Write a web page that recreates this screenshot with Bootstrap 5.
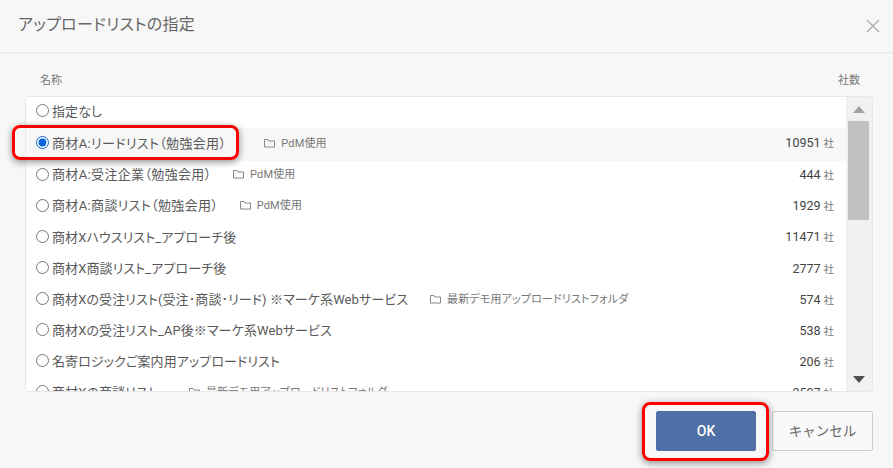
<!DOCTYPE html>
<html lang="ja">
<head>
<meta charset="utf-8">
<title>アップロードリストの指定</title>
<link href="https://cdn.jsdelivr.net/npm/bootstrap@5.3.0/dist/css/bootstrap.min.css" rel="stylesheet">
<style>
html,body{height:100%;}
body{background:#f7f7f7;font-family:Roboto,"Noto Sans CJK JP",sans-serif;font-size:13px;color:#555;overflow:hidden;position:relative;font-feature-settings:"palt";}
.dlg-head{height:54px;padding:0 12px 3px 18px;border-bottom:2px solid #ececec;}
.dlg-title{font-size:16px;color:#666;font-weight:400;margin:0;letter-spacing:.3px;}
.dlg-close{width:16px;height:16px;color:#aaa;margin-top:3px;}
.col-heads{padding:20px 33px 8px 40px;font-size:11px;color:#777;line-height:13px;height:42px;}
.list-wrap{margin:0 20px 0 25px;height:296px;background:#f1f1f1;border:1px solid #e8e8e8;border-radius:3px;overflow:hidden;}
.list-scroll{background:#fff;overflow:hidden;flex:1 1 auto;min-width:0;}
.row-item{height:31.1px;padding:0 12px 2px 10px;white-space:nowrap;}
.row-item.is-on{background:#f7f7f7;height:32.5px;}
.row-item input{width:13px;height:13px;margin:0 3px 2px 0;flex:none;accent-color:#0a63d8;}
.row-name{font-size:13px;color:#595959;letter-spacing:.1px;}
.row-name.wide{letter-spacing:.35px;}
.row-folder{margin-left:21.5px;font-size:11px;color:#777;padding-top:1px;letter-spacing:.15px;}
.row-folder.far{margin-left:38px;}
.row-folder.mid{margin-left:31px;}
.row-folder.near{margin-left:22px;}
.row-folder svg{width:11px;height:10px;margin-right:6px;vertical-align:-1px;}
.row-count{font-size:12.5px;color:#444;}
.row-unit{font-size:10.5px;color:#777;margin-left:3px;}
.sbar{width:26px;flex:none;padding:0 3px 0 2px;}
.sbar-up,.sbar-down{height:24px;}
.sbar-up i{border-left:6px solid transparent;border-right:6px solid transparent;border-bottom:7px solid #a3a3a3;display:block;}
.sbar-down i{border-left:6px solid transparent;border-right:6px solid transparent;border-top:7px solid #505050;display:block;}
.sbar-thumb{height:99px;background:#c1c1c1;}
.dlg-foot{padding:19px 20px 0 0;gap:16px;}
.btn-ok{width:100px;height:40px;background:#4f70a6;border-color:#4f70a6;color:#fff;font-size:14px;font-weight:500;border-radius:2px;}
.btn-cancel{width:101px;height:40px;background:#f9f9f9;border:1px solid #ccc;color:#666;font-size:13.5px;border-radius:2px;padding:0;}
.mark-box{position:absolute;border:3px solid #f00;border-radius:8px;box-shadow:0 2px 6px 1px rgba(0,0,0,.35);pointer-events:none;}
.mark-a{left:12px;top:125px;width:227px;height:35px;}
.mark-b{left:642px;top:402px;width:127px;height:59px;}
</style>
</head>
<body>
<div class="dlg-head d-flex align-items-center justify-content-between">
  <h1 class="dlg-title">アップロードリストの指定</h1>
  <svg class="dlg-close" viewBox="0 0 16 16" fill="none" stroke="currentColor" stroke-width="1.3"><path d="M2 2 14 14M14 2 2 14"/></svg>
</div>
<div class="col-heads d-flex justify-content-between"><span>名称</span><span>社数</span></div>
<div class="list-wrap d-flex">
  <div class="list-scroll">
    <label class="row-item d-flex align-items-center justify-content-between"><span class="d-flex align-items-center"><input type="radio" name="l"><span class="row-name">指定なし</span></span></label>
    <label class="row-item is-on d-flex align-items-center justify-content-between"><span class="d-flex align-items-center"><input type="radio" name="l" checked><span class="row-name wide">商材A:リードリスト（勉強会用）</span><span class="row-folder far"><svg viewBox="0 0 11 10" fill="none" stroke="#888"><path d="M.5 1.5h3.5l1 1.500h5.500v6H.5z"/></svg>PdM使用</span></span><span><span class="row-count">10951</span><span class="row-unit">社</span></span></label>
    <label class="row-item d-flex align-items-center justify-content-between"><span class="d-flex align-items-center"><input type="radio" name="l"><span class="row-name wide">商材A:受注企業（勉強会用）</span><span class="row-folder"><svg viewBox="0 0 11 10" fill="none" stroke="#888"><path d="M.5 1.5h3.5l1 1.500h5.500v6H.5z"/></svg>PdM使用</span></span><span><span class="row-count">444</span><span class="row-unit">社</span></span></label>
    <label class="row-item d-flex align-items-center justify-content-between"><span class="d-flex align-items-center"><input type="radio" name="l"><span class="row-name wide">商材A:商談リスト（勉強会用）</span><span class="row-folder"><svg viewBox="0 0 11 10" fill="none" stroke="#888"><path d="M.5 1.5h3.5l1 1.500h5.500v6H.5z"/></svg>PdM使用</span></span><span><span class="row-count">1929</span><span class="row-unit">社</span></span></label>
    <label class="row-item d-flex align-items-center justify-content-between"><span class="d-flex align-items-center"><input type="radio" name="l"><span class="row-name">商材Xハウスリスト_アプローチ後</span></span><span><span class="row-count">11471</span><span class="row-unit">社</span></span></label>
    <label class="row-item d-flex align-items-center justify-content-between"><span class="d-flex align-items-center"><input type="radio" name="l"><span class="row-name">商材X商談リスト_アプローチ後</span></span><span><span class="row-count">2777</span><span class="row-unit">社</span></span></label>
    <label class="row-item d-flex align-items-center justify-content-between"><span class="d-flex align-items-center"><input type="radio" name="l"><span class="row-name">商材Xの受注リスト(受注･商談･リード) ※マーケ系Webサービス</span><span class="row-folder near"><svg viewBox="0 0 11 10" fill="none" stroke="#888"><path d="M.5 1.5h3.5l1 1.500h5.500v6H.5z"/></svg>最新デモ用アップロードリストフォルダ</span></span><span><span class="row-count">574</span><span class="row-unit">社</span></span></label>
    <label class="row-item d-flex align-items-center justify-content-between"><span class="d-flex align-items-center"><input type="radio" name="l"><span class="row-name">商材Xの受注リスト_AP後※マーケ系Webサービス</span></span><span><span class="row-count">538</span><span class="row-unit">社</span></span></label>
    <label class="row-item d-flex align-items-center justify-content-between"><span class="d-flex align-items-center"><input type="radio" name="l"><span class="row-name">名寄ロジックご案内用アップロードリスト</span></span><span><span class="row-count">206</span><span class="row-unit">社</span></span></label>
    <label class="row-item d-flex align-items-center justify-content-between"><span class="d-flex align-items-center"><input type="radio" name="l"><span class="row-name">商材Xの商談リスト</span><span class="row-folder mid"><svg viewBox="0 0 11 10" fill="none" stroke="#888"><path d="M.5 1.5h3.5l1 1.500h5.500v6H.5z"/></svg>最新デモ用アップロードリストフォルダ</span></span><span><span class="row-count">2507</span><span class="row-unit">社</span></span></label>
  </div>
  <div class="sbar d-flex flex-column">
    <div class="sbar-up d-flex align-items-center justify-content-center"><i></i></div>
    <div class="sbar-thumb"></div>
    <div class="flex-grow-1"></div>
    <div class="sbar-down d-flex align-items-center justify-content-center"><i></i></div>
  </div>
</div>
<div class="dlg-foot d-flex justify-content-end">
  <button type="button" class="btn btn-ok">OK</button>
  <button type="button" class="btn btn-cancel">キャンセル</button>
</div>
<div class="mark-box mark-a"></div>
<div class="mark-box mark-b"></div>
<script src="https://cdn.jsdelivr.net/npm/bootstrap@5.3.0/dist/js/bootstrap.bundle.min.js"></script>
</body>
</html>
